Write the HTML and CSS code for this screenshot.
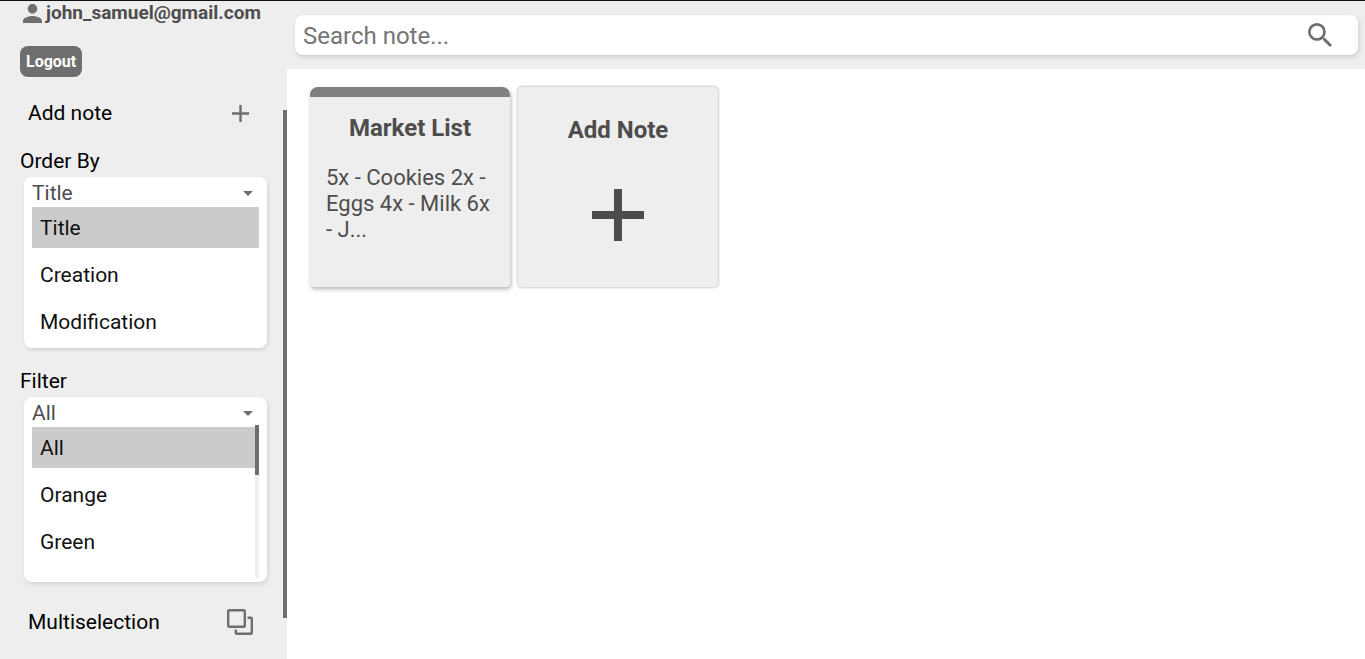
FILE: index.html
```html
<!DOCTYPE html>
<html lang="en">
<head>
<meta charset="utf-8">
<meta name="viewport" content="width=device-width, initial-scale=1">
<title>Notes</title>
<link rel="stylesheet" href="styles.css">
</head>
<body>
<div class="app">
  <aside class="sidebar">
    <div class="menu">
      <div class="account">
        <svg class="account-icon" viewBox="4 4 16 16" aria-hidden="true"><path d="M12 12c2.21 0 4-1.79 4-4s-1.79-4-4-4-4 1.790-4 4 1.790 4 4 4zm0 2c-2.670 0-8 1.340-8 4v2h16v-2c0-2.660-5.330-4-8-4z"/></svg>
        <span class="email">john_samuel@gmail.com</span>
      </div>
      <button class="logout" type="button">Logout</button>
      <button class="action" type="button">
        <span>Add note</span>
        <svg class="icon-plus" viewBox="5 5 14 14" aria-hidden="true"><path d="M19 13h-6v6h-2v-6H5v-2h6V5h2v6h6v2z"/></svg>
      </button>
      <section class="field">
        <label class="field-label" for="order">Order By</label>
        <div class="dropdown">
          <div class="dropdown-head">
            <select id="order" class="dropdown-value">
              <option>Title</option><option>Creation</option><option>Modification</option>
            </select>
            <svg class="caret" viewBox="0 0 10 5" aria-hidden="true"><path d="M0 0h10L5 5z"/></svg>
          </div>
          <div class="options">
            <button class="option selected" type="button">Title</button>
            <button class="option" type="button">Creation</button>
            <button class="option" type="button">Modification</button>
          </div>
        </div>
      </section>
      <section class="field">
        <label class="field-label" for="filter">Filter</label>
        <div class="dropdown dropdown-long">
          <div class="dropdown-head">
            <select id="filter" class="dropdown-value">
              <option>All</option><option>Orange</option><option>Green</option>
            </select>
            <svg class="caret" viewBox="0 0 10 5" aria-hidden="true"><path d="M0 0h10L5 5z"/></svg>
          </div>
          <div class="options">
            <button class="option selected" type="button">All</button>
            <button class="option" type="button">Orange</button>
            <button class="option" type="button">Green</button>
          </div>
          <div class="list-scroll"><div class="list-thumb"></div></div>
        </div>
      </section>
      <button class="action action-multi" type="button">
        <span>Multiselection</span>
        <svg class="icon-multi" viewBox="0 0 26 26" aria-hidden="true"><rect x="1.200" y="1.200" width="16.600" height="16.600" rx="1"/><path d="M20.500 8.800H23.800a1 1 0 0 1 1 1V23.800a1 1 0 0 1-1 1H9.800a1 1 0 0 1-1-1v-3.300"/></svg>
      </button>
    </div>
    <div class="rail"><div class="rail-thumb"></div></div>
  </aside>
  <main class="content">
    <header class="topbar">
      <form class="search">
        <input class="search-input" type="text" placeholder="Search note..." aria-label="Search note">
        <button class="search-button" type="button" aria-label="Search">
          <svg class="icon-search" viewBox="3 3 17.500 17.500" aria-hidden="true"><path d="M15.500 14h-.790l-.280-.270A6.471 6.471 0 0 0 16 9.500 6.500 6.500 0 1 0 9.500 16c1.610 0 3.090-.590 4.230-1.570l.270.280v.790l5 4.990L20.490 19l-4.990-5zm-6 0C7.010 14 5 11.990 5 9.500S7.010 5 9.500 5 14 7.010 14 9.500 11.990 14 9.500 14z"/></svg>
        </button>
      </form>
    </header>
    <div class="notes">
      <article class="note">
        <h2 class="note-title">Market List</h2>
        <p class="note-text">5x - Cookies 2x - Eggs 4x - Milk 6x - J...</p>
      </article>
      <button class="add-card" type="button">
        <span class="add-title">Add Note</span>
        <svg class="icon-add" viewBox="0 0 52 52" aria-hidden="true"><path d="M22 0h8v22h22v8H30v22h-8V30H0v-8h22z"/></svg>
      </button>
    </div>
  </main>
</div>
</body>
</html>
```
FILE: styles.css
```css
* {
  box-sizing: border-box;
}

body {
  margin: 0;
  font-family: Roboto, "Liberation Sans", sans-serif;
  font-size: 21px;
  line-height: 24px;
  color: #4d4d4d;
  background: #fff;
}

button,
input,
select {
  font: inherit;
  border: 0;
  margin: 0;
  padding: 0;
  background: none;
}

svg {
  display: block;
  flex: none;
  fill: #6e6e6e;
}

.app {
  display: flex;
  min-height: 100vh;
  border-top: 1px solid #111;
}

.sidebar {
  display: flex;
  flex: none;
  width: 287px;
  background: #eee;
}

.menu {
  flex: 1;
  display: flex;
  flex-direction: column;
  padding: 0 16px 0 20px;
}

.account {
  display: flex;
  align-items: center;
  gap: 4px;
  padding-left: 3px;
  font-size: 19px;
  font-weight: 700;
}

.account-icon {
  width: 19px;
  height: 19px;
}

.logout {
  align-self: flex-start;
  margin-top: 21px;
  padding: 0 6px;
  height: 31px;
  border-radius: 8px;
  background: #6e6e6e;
  color: #fff;
  font-size: 16px;
  font-weight: 700;
}

.action {
  display: flex;
  align-items: center;
  justify-content: space-between;
  margin-top: 16px;
  padding: 0 18px 0 8px;
  height: 40px;
  color: #000;
}

.action-multi {
  margin-top: 20px;
  padding-right: 14px;
}

.icon-plus {
  width: 17px;
  height: 17px;
}

.icon-multi {
  width: 26px;
  height: 26px;
  fill: none;
  stroke: #6e6e6e;
  stroke-width: 2.4;
}

.field {
  margin-top: 16px;
}

.field-label {
  display: block;
  color: #000;
}

.field + .field {
  margin-top: 21px;
}

.dropdown {
  position: relative;
  margin: 4px 0 0 4px;
  padding: 0 8px 6px;
  border-radius: 8px;
  background: #fff;
  box-shadow: 1px 2px 4px rgba(0, 0, 0, 0.12);
}

.dropdown-long {
  padding-bottom: 20px;
}

.dropdown-long .options {
  padding-right: 4px;
}

.dropdown-head {
  display: flex;
  align-items: center;
  height: 30px;
  padding: 2px 6px 0 0;
}

.dropdown-value {
  flex: 1;
  appearance: none;
  color: #4d4d4d;
}

.caret {
  width: 10px;
  height: 5px;
}

.options {
  display: flex;
  flex-direction: column;
  gap: 6px;
}

.option {
  height: 41px;
  padding: 0 8px;
  text-align: left;
  color: #111;
}

.selected {
  background: #cbcbcb;
}

.list-scroll {
  position: absolute;
  top: 28px;
  right: 8px;
  bottom: 4px;
  width: 4px;
  background: #eee;
}

.list-thumb {
  height: 50px;
  background: #6e6e6e;
}

.rail {
  width: 4px;
  padding: 109px 0 41px;
  display: flex;
}

.rail-thumb {
  flex: 1;
  background: #6e6e6e;
}

.content {
  flex: 1;
  min-width: 0;
}

.topbar {
  padding: 14px 7px 14px 8px;
  background: #eee;
}

.search {
  display: flex;
  align-items: center;
  height: 40px;
  padding: 0 26px 0 8px;
  border-radius: 8px;
  background: #fff;
  box-shadow: 1px 2px 4px rgba(0, 0, 0, 0.15);
}

.search-input {
  flex: 1;
  min-width: 0;
  height: 40px;
  padding-top: 2px;
  font-size: 24px;
  color: #4d4d4d;
}

.search-input::placeholder {
  color: #757575;
}

.icon-search {
  width: 24px;
  height: 24px;
}

.notes {
  display: flex;
  flex-wrap: wrap;
  gap: 8px;
  padding: 18px 23px;
}

.note,
.add-card {
  width: 200px;
  height: 200px;
  background: #eee;
  color: #4d4d4d;
}

.note {
  padding: 18px 16px 0;
  border-top: 10px solid #808080;
  border-radius: 8px 8px 4px 4px;
  box-shadow: 1px 2px 4px rgba(0, 0, 0, 0.3);
}

.note-title,
.add-title {
  margin: 0;
  font-size: 24px;
  line-height: 26px;
  font-weight: 700;
  text-align: center;
}

.note-text {
  margin: 24px 0 0;
  font-size: 22px;
  line-height: 26px;
}

.add-card {
  display: flex;
  flex-direction: column;
  align-items: center;
  gap: 46px;
  padding-top: 30px;
  border-radius: 4px;
  box-shadow: 0 0 3px rgba(0, 0, 0, 0.4);
}

.icon-add {
  width: 52px;
  height: 52px;
  fill: #4d4d4d;
}
```
